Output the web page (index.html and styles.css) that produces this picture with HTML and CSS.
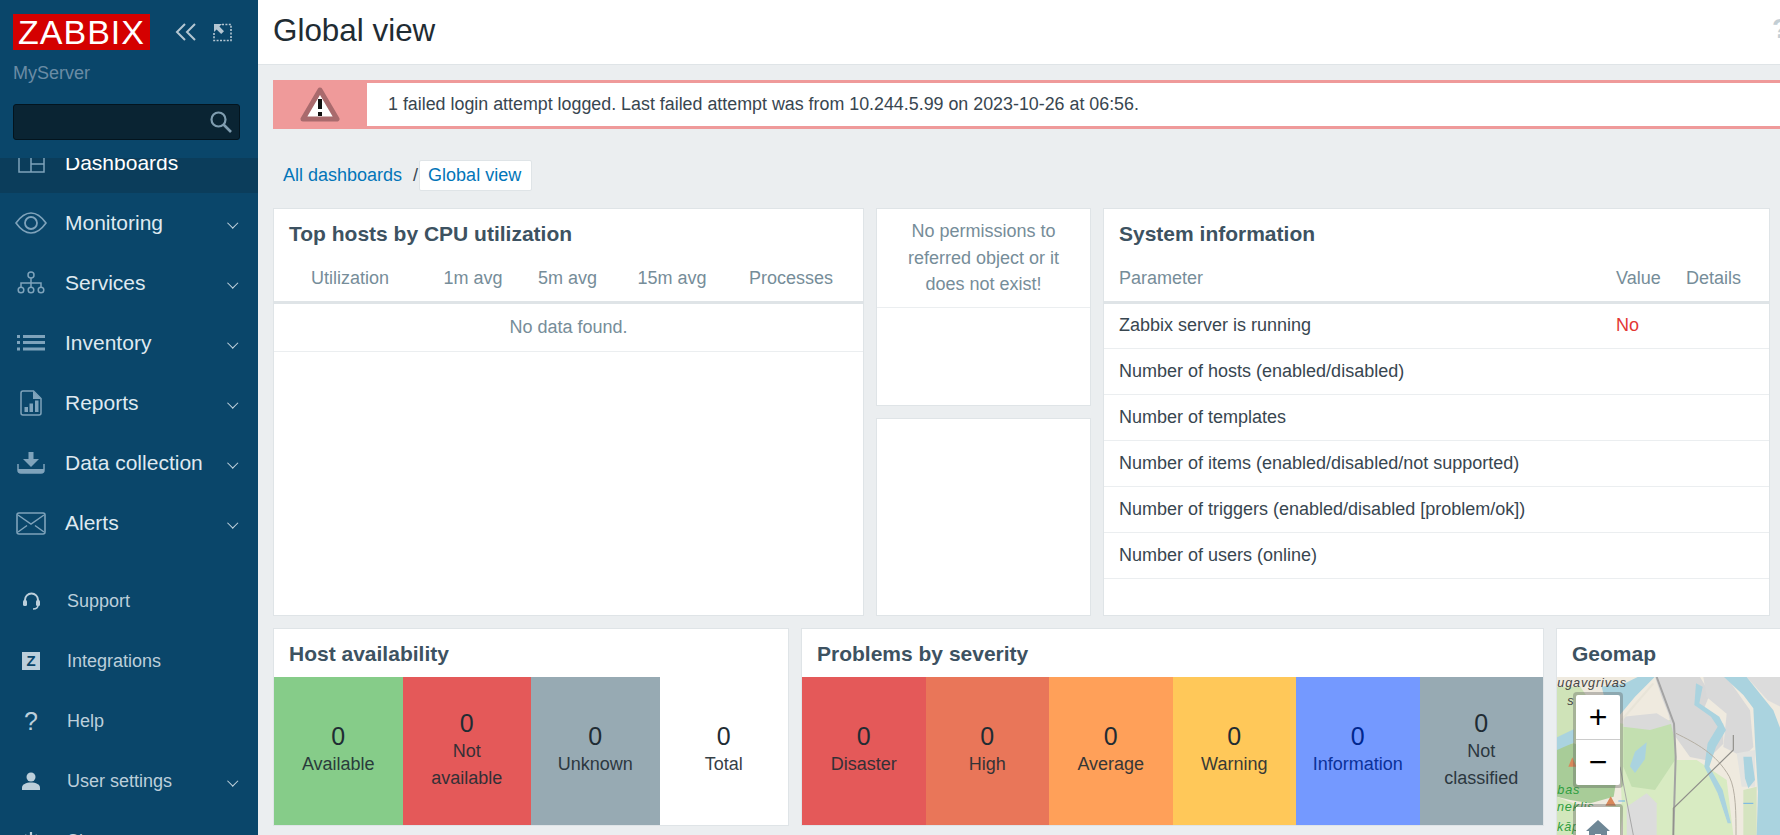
FILE: index.html
```html
<!DOCTYPE html>
<html lang="en">
<head>
    <meta charset="UTF-8">
    <title>Dashboard - Global view</title>
    <link rel="stylesheet" href="styles.css">
</head>
<body>

<aside class="sidebar">
    <div class="side-top">
        <div class="logo-row">
            <div class="logo">ZABBIX</div>
            <svg class="collapse-icon" width="22" height="18" viewBox="0 0 22 18"><path d="M10 1 2 9l8 8M20 1l-8 8 8 8" fill="none" stroke="#b4c6d2" stroke-width="2"/></svg>
            <svg class="kiosk-icon" width="19" height="19" viewBox="0 0 19 19"><path d="M9 1.500h9v16H1V10" fill="none" stroke="#b4c6d2" stroke-width="1.600" stroke-dasharray="2 1.400"/><path d="M1 1h8L6.400 3.600 11 8.200 8.200 11 3.600 6.400 1 9z" fill="#b4c6d2"/></svg>
        </div>
        <div class="server-name">MyServer</div>
        <div class="search-box">
            <svg width="24" height="24" viewBox="0 0 24 24"><circle cx="9.500" cy="9.500" r="7" fill="none" stroke="#7f9db0" stroke-width="2.200"/><path d="m14.500 14.500 7.500 7.500" stroke="#7f9db0" stroke-width="2.600"/></svg>
        </div>
    </div>

    <div class="menu-clip">
        <ul class="menu">
            <li class="menu-item current">
                <span class="menu-icon"><svg width="27" height="20" viewBox="0 0 27 20"><path d="M1 1h25v18H1zM13 1v18M13 11h13" fill="none" stroke="#7fa3bb" stroke-width="1.500"/></svg></span>
                Dashboards
            </li>
            <li class="menu-item has-sub">
                <span class="menu-icon"><svg width="32" height="24" viewBox="0 0 32 24"><path d="M1 12C6 5 11 2 16 2s10 3 15 10c-5 7-10 10-15 10S6 19 1 12z" fill="none" stroke="#7fa3bb" stroke-width="1.600"/><circle cx="16" cy="12" r="6" fill="none" stroke="#7fa3bb" stroke-width="1.800"/></svg></span>
                Monitoring
            </li>
            <li class="menu-item has-sub">
                <span class="menu-icon"><svg width="28" height="24" viewBox="0 0 28 24"><circle cx="14" cy="4" r="3" fill="none" stroke="#7fa3bb" stroke-width="1.500"/><path d="M14 7v5M4 16v-4h20v4M14 12v4" fill="none" stroke="#7fa3bb" stroke-width="1.500"/><circle cx="4" cy="19" r="2.800" fill="none" stroke="#7fa3bb" stroke-width="1.500"/><circle cx="14" cy="19" r="2.800" fill="none" stroke="#7fa3bb" stroke-width="1.500"/><circle cx="24" cy="19" r="2.800" fill="none" stroke="#7fa3bb" stroke-width="1.500"/></svg></span>
                Services
            </li>
            <li class="menu-item has-sub">
                <span class="menu-icon"><svg width="28" height="16" viewBox="0 0 28 16"><path d="M0 0h3v3H0zM0 6h3v3H0zM0 12.500h3v3H0zM6 0h22v3H6zM6 6h22v3H6zM6 12.500h22v3H6z" fill="#7fa3bb"/></svg></span>
                Inventory
            </li>
            <li class="menu-item has-sub">
                <span class="menu-icon"><svg width="22" height="26" viewBox="0 0 22 26"><path d="M3 1h10.500L21 8.500V23a2 2 0 0 1-2 2H3a2 2 0 0 1-2-2V3a2 2 0 0 1 2-2z" fill="none" stroke="#7fa3bb" stroke-width="1.500"/><path d="M13 1v8h8z" fill="#7fa3bb"/><path d="M4.500 17h3.500v5H4.500zM9.500 13.500H13V22H9.500zM15 10.500h3.500V22H15z" fill="#7fa3bb"/></svg></span>
                Reports
            </li>
            <li class="menu-item has-sub">
                <span class="menu-icon"><svg width="28" height="22" viewBox="0 0 28 22"><path d="M11.500 0h5v7H22l-8 8-8-8h5.500z" fill="#7fa3bb"/><path d="M1 12v6a3 3 0 0 0 3 3h20a3 3 0 0 0 3-3v-6" fill="none" stroke="#7fa3bb" stroke-width="1.500"/><path d="M1 17h26v1a3 3 0 0 1-3 3H4a3 3 0 0 1-3-3z" fill="#7fa3bb"/></svg></span>
                Data collection
            </li>
            <li class="menu-item has-sub">
                <span class="menu-icon"><svg width="30" height="23" viewBox="0 0 30 23"><rect x="1" y="1" width="28" height="21" rx="2" fill="none" stroke="#7fa3bb" stroke-width="1.600"/><path d="m2 3 13 9 13-9M2 20l9-6.500M28 20l-9-6.500" fill="none" stroke="#7fa3bb" stroke-width="1.500"/></svg></span>
                Alerts
            </li>
        </ul>
        <ul class="menu user-menu">
            <li class="menu-item">
                <span class="menu-icon"><svg width="17" height="19" viewBox="0 0 17 19"><path d="M2 10V8a6.500 6.500 0 0 1 13 0v2" fill="none" stroke="#bccfdb" stroke-width="2"/><rect x="0" y="8" width="4" height="6" rx="1.500" fill="#bccfdb"/><rect x="13" y="8" width="4" height="6" rx="1.500" fill="#bccfdb"/><path d="M15 13c0 3-2 4-5 4" fill="none" stroke="#bccfdb" stroke-width="1.600"/></svg></span>
                Support
            </li>
            <li class="menu-item">
                <span class="menu-icon"><span class="z-icon">Z</span></span>
                Integrations
            </li>
            <li class="menu-item">
                <span class="menu-icon help-icon">?</span>
                Help
            </li>
            <li class="menu-item has-sub">
                <span class="menu-icon"><svg width="18" height="18" viewBox="0 0 18 18"><circle cx="9" cy="5" r="4.500" fill="#bccfdb"/><path d="M0 18v-2.500C0 12.500 4 10.500 9 10.500s9 2 9 5V18z" fill="#bccfdb"/></svg></span>
                User settings
            </li>
            <li class="menu-item">
                <span class="menu-icon"><svg width="18" height="18" viewBox="0 0 18 18"><path d="M9 0v8" stroke="#bccfdb" stroke-width="2.200"/><path d="M4.500 3a8 8 0 1 0 9 0" fill="none" stroke="#bccfdb" stroke-width="2"/></svg></span>
                Sign out
            </li>
        </ul>
    </div>
</aside>

<main class="content">
    <header class="page-head">
        <h1>Global view</h1>
        <span class="head-help">?</span>
    </header>

    <div class="msg-bad">
        <div class="msg-icon">
            <svg width="40" height="36" viewBox="0 0 40 36"><path d="M20 3 37 32H3z" fill="#fff" stroke="#a96a6d" stroke-width="5" stroke-linejoin="round"/><path d="M18 12h4v10h-4zM18 25h4v4h-4z" fill="#111"/></svg>
        </div>
        <div class="msg-text">1 failed login attempt logged. Last failed attempt was from 10.244.5.99 on 2023-10-26 at 06:56.</div>
    </div>

    <nav class="crumbs">
        <a>All dashboards</a>
        <span class="crumb-sep">/</span>
        <a class="crumb-current">Global view</a>
    </nav>

    <section class="widget-row top-row">
        <div class="widget w-hosts">
            <h4>Top hosts by CPU utilization</h4>
            <table class="list hosts-table">
                <colgroup><col class="c1"><col class="c2"><col class="c3"><col class="c4"><col class="c5"><col></colgroup>
                <thead>
                    <tr><th>Utilization</th><th>1m avg</th><th>5m avg</th><th>15m avg</th><th>Processes</th><th></th></tr>
                </thead>
                <tbody>
                    <tr><td colspan="6" class="no-data">No data found.</td></tr>
                </tbody>
            </table>
        </div>

        <div class="middle-col">
            <div class="widget w-small">
                <div class="no-perm">No permissions to referred object or it does not exist!</div>
            </div>
            <div class="widget w-small"></div>
        </div>

        <div class="widget w-sysinfo">
            <h4>System information</h4>
            <table class="list sys-table">
                <colgroup><col class="s1"><col class="s2"><col class="s3"></colgroup>
                <thead>
                    <tr><th>Parameter</th><th>Value</th><th>Details</th></tr>
                </thead>
                <tbody>
                    <tr><td>Zabbix server is running</td><td class="red">No</td><td></td></tr>
                    <tr><td>Number of hosts (enabled/disabled)</td><td></td><td></td></tr>
                    <tr><td>Number of templates</td><td></td><td></td></tr>
                    <tr><td>Number of items (enabled/disabled/not supported)</td><td></td><td></td></tr>
                    <tr><td>Number of triggers (enabled/disabled [problem/ok])</td><td></td><td></td></tr>
                    <tr><td>Number of users (online)</td><td></td><td></td></tr>
                </tbody>
            </table>
        </div>
    </section>

    <section class="widget-row bottom-row">
        <div class="widget w-avail">
            <h4>Host availability</h4>
            <div class="tiles">
                <div class="tile t-available"><b>0</b><span>Available</span></div>
                <div class="tile t-disaster"><b>0</b><span>Not available</span></div>
                <div class="tile t-unknown"><b>0</b><span>Unknown</span></div>
                <div class="tile"><b>0</b><span>Total</span></div>
            </div>
        </div>

        <div class="widget w-severity">
            <h4>Problems by severity</h4>
            <div class="tiles">
                <div class="tile t-disaster"><b>0</b><span>Disaster</span></div>
                <div class="tile t-high"><b>0</b><span>High</span></div>
                <div class="tile t-average"><b>0</b><span>Average</span></div>
                <div class="tile t-warning"><b>0</b><span>Warning</span></div>
                <div class="tile t-info"><b>0</b><span>Information</span></div>
                <div class="tile t-unknown"><b>0</b><span>Not classified</span></div>
            </div>
        </div>

        <div class="widget w-geomap">
            <h4>Geomap</h4>
            <div class="map">
                <svg class="map-tiles" width="224" height="158" viewBox="51 171 672 474" preserveAspectRatio="none">
                    <rect x="51" y="171" width="672" height="474" fill="#efeadf"/>
                    <path d="M51 200h70l40 60-20 120-90 30z" fill="#cfe3b8"/>
                    <path d="M240 310l60 10 50-20 50 10 10 110 60 0 90 60 20 165H250l-10-210z" fill="#d8ebc2"/>
                    <path d="M250 320l150-20 5 120-60 90-70-10-25-60z" fill="#c3dfb0"/>
                    <path d="M51 380l50-10 70 30 60 70-10 60-70 20-60-10-40-10z" fill="#a8cc98"/>
                    <path d="M51 530l100 40 100-20-10 95H51z" fill="#d2e7bc"/>
                    <path d="M345 171h135l30 50-20 50 60 40 0 60-50 50-50-10-50-70-15-60-20-50z" fill="#d7d7d7"/>
                    <path d="M250 290l100-10 50 30-70 20-80-10z" fill="#dadada"/>
                    <path d="M490 171h70l70 100 10 110-30 30-60-30 10-100-60-50z" fill="#d9d9d9"/>
                    <path d="M620 171h103v90l-40-20z" fill="#dcdcdc"/>
                    <path d="M590 400l55-10v110l-40 0z" fill="#e3e3e0"/>
                    <path d="M610 510l40-10v145h-40z" fill="#d5e4c0"/>
                    <path d="M260 560l60-40 30 30 0 95h-90z" fill="#dcdcdc"/>
                    <path d="M552 171h68l40 50 40 50 23 60v314h-73l4-130-8-130-6-120-30-40z" fill="#aad3df"/>
                    <path d="M468 190l20 10-10 50 60 40 20 40-30 50-20 60 40 70 25 100-10 0-30-90-40-80 10-70 30-50-20-30-50-35z" fill="#aad3df"/>
                    <path d="M185 200l70-10 40-20 50 0-60 60-50 60-30-10z" fill="#aad3df"/>
                    <path d="M51 352l50-24 0 40-50 22z" fill="#aad3df"/>
                    <path d="M285 395l35-28-5 50-30 42-15-20z" fill="#aad3df"/>
                    <path d="M610 410h25l10 70-20 25-10-30z" fill="#aad3df"/>
                    <path d="M350 171l52 140 5 100-7 234" fill="none" stroke="#a3a3a3" stroke-width="6"/>
                    <path d="M408 340c60 30 120 60 160 130 20 40 20 110 20 175" fill="none" stroke="#b5afa3" stroke-width="3"/>
                    <path d="M580 345v45L400 565v80" fill="none" stroke="#908f8a" stroke-width="3.500"/>
                    <path d="M245 300 340 190" fill="none" stroke="#e8e4d8" stroke-width="6"/>
                    <path d="M240 440l40 205" fill="none" stroke="#a7a7a7" stroke-width="3"/>
                    <path d="M85 440l12-28 12 28zM196 557l16-28 16 28z" fill="#d9875a"/>
                    <path d="M610 550h30" stroke="#6fb3e8" stroke-width="3"/>
                    <path d="M235 543h20" stroke="#6fb3e8" stroke-width="3"/>
                    <text x="52" y="202" class="map-label">ugavgrivas</text>
                    <text x="82" y="256" class="map-label">s</text>
                    <text x="52" y="522" class="map-label green">bas</text>
                    <text x="51" y="572" class="map-label green">neklis</text>
                    <text x="51" y="632" class="map-label green">kāp</text>
                </svg>
                <div class="map-ctrl zoom-ctrl">
                    <a class="plus">+</a>
                    <a class="minus">&minus;</a>
                </div>
                <div class="map-ctrl home-ctrl">
                    <a><svg width="24" height="20" viewBox="0 0 24 20"><path d="M12 0 24 11h-3v9h-6v-6H9v6H3v-9H0z" fill="#6e8796"/></svg></a>
                </div>
            </div>
        </div>
    </section>
</main>

</body>
</html>
```

FILE: styles.css
```css
* {
    box-sizing: border-box;
}

html, body {
    height: 100%;
}

body {
    margin: 0;
    display: flex;
    overflow: hidden;
    background-color: #ebeef0;
    color: #1f2c33;
    font-family: "Liberation Sans", Arial, sans-serif;
    font-size: 18px;
}

/* sidebar */
.sidebar {
    width: 258px;
    height: 835px;
    flex-shrink: 0;
    overflow: hidden;
    background-color: #0a466a;
}

.side-top {
    height: 158px;
    padding: 14px 18px 0 13px;
}

.logo-row {
    display: flex;
    align-items: center;
}

.logo {
    width: 137px;
    height: 36px;
    background-color: #d40000;
    color: #fff;
    font-size: 34px;
    line-height: 37px;
    letter-spacing: 1px;
    text-align: center;
}

.collapse-icon {
    margin-left: 25px;
}

.kiosk-icon {
    margin-left: 16px;
}

.server-name {
    margin-top: 13px;
    color: #6a8ca5;
    font-size: 18px;
    line-height: 20px;
}

.search-box {
    display: flex;
    align-items: center;
    justify-content: flex-end;
    height: 36px;
    margin-top: 21px;
    padding-right: 6px;
    background-color: #0a2433;
    border: 1px solid #03141e;
    border-radius: 3px;
}

.menu-clip {
    height: 677px;
    overflow: hidden;
}

.menu {
    list-style: none;
    margin: -25px 0 0;
    padding: 0;
}

.user-menu {
    margin-top: 18px;
}

.menu-item {
    display: flex;
    align-items: center;
    height: 60px;
    position: relative;
    color: #dfe9f0;
    font-size: 21px;
}

.menu-item.current {
    background-color: #0b3d5b;
    color: #fff;
}

.menu-icon {
    display: flex;
    align-items: center;
    justify-content: center;
    width: 38px;
    margin: 0 15px 0 12px;
}

.has-sub::after {
    content: "";
    position: absolute;
    left: 229px;
    top: 26px;
    width: 6.500px;
    height: 6.500px;
    border-right: 1.500px solid #c5d5df;
    border-bottom: 1.500px solid #c5d5df;
    transform: rotate(45deg);
}

.user-menu .menu-item {
    color: #bccfdb;
    font-size: 18px;
}

.user-menu .menu-icon {
    margin-right: 17px;
}

.z-icon {
    display: block;
    width: 18px;
    height: 18px;
    background-color: #bccfdb;
    color: #0a466a;
    font-size: 15px;
    font-weight: bold;
    line-height: 18px;
    text-align: center;
}

.help-icon {
    font-size: 25px;
    color: #bccfdb;
}

/* main part */
.content {
    flex: 1;
    min-width: 0;
    height: 835px;
    overflow: hidden;
}

.page-head {
    display: flex;
    align-items: center;
    justify-content: space-between;
    height: 65px;
    padding-left: 15px;
    background-color: #fff;
    border-bottom: 1px solid #dfe4e7;
}

.page-head h1 {
    margin: 0 0 2px;
    font-size: 31.400px;
    font-weight: normal;
}

.head-help {
    margin: 0 -9px 6px 0;
    color: #c3ced4;
    font-size: 28px;
    font-weight: bold;
}

.msg-bad {
    display: flex;
    height: 49px;
    margin: 15px -20px 0 15px;
    border: 3px solid #ef9a9a;
    border-radius: 3px;
    background-color: #fff;
}

.msg-icon {
    display: flex;
    align-items: center;
    justify-content: center;
    flex-shrink: 0;
    width: 94px;
    margin: -3px 0 -3px -3px;
    background-color: #ef9a9a;
}

.msg-text {
    padding-left: 21px;
    color: #384650;
    font-size: 17.850px;
    line-height: 43px;
}

.crumbs {
    display: flex;
    align-items: center;
    height: 34px;
    margin: 29px 0 0 15px;
}

.crumbs a {
    padding: 0 9px 0 10px;
    color: #0275b8;
    line-height: 29px;
}

.crumb-sep {
    margin-left: 2px;
    color: #384650;
}

.crumbs .crumb-current {
    margin-left: 1px;
    padding: 0 10px 0 8px;
    background-color: #fff;
    border: 1px solid #dfe4e7;
    border-radius: 2px;
}

.widget-row {
    display: flex;
    gap: 12px;
    margin-left: 15px;
}

.top-row {
    height: 408px;
    margin-top: 16px;
}

.bottom-row {
    align-items: flex-start;
    margin-top: 12px;
    width: 1560px;
}

.widget {
    background-color: #fff;
    border: 1px solid #dfe4e7;
    color: #1f2c33;
}

.widget h4 {
    margin: 0;
    height: 48px;
    padding-left: 15px;
    color: #3d5261;
    font-size: 21px;
    font-weight: bold;
    line-height: 50px;
}

.w-hosts {
    width: 591px;
}

.middle-col {
    display: flex;
    flex-direction: column;
    gap: 12px;
    width: 215px;
}

.w-small {
    flex: 1;
}

.no-perm {
    padding: 9px 15px;
    height: 99px;
    border-bottom: 1px solid #ebeef0;
    color: #768d99;
    line-height: 26.500px;
    text-align: center;
}

.w-sysinfo {
    width: 667px;
}

/* tables */
.list {
    width: 100%;
    table-layout: fixed;
    border-collapse: collapse;
}

.list th {
    height: 45px;
    padding: 0 0 0 15px;
    border-bottom: 3px solid #dfe4e7;
    color: #768d99;
    font-weight: normal;
    text-align: left;
}

.list td {
    height: 46px;
    padding: 0 0 0 15px;
    border-bottom: 1px solid #ebeef0;
    color: #384650;
}

.hosts-table th {
    padding: 0;
    text-align: center;
}

.c1 { width: 152px; }
.c2 { width: 94px; }
.c3 { width: 95px; }
.c4 { width: 114px; }
.c5 { width: 124px; }

.hosts-table td.no-data {
    height: 49px;
    padding: 0;
    color: #768d99;
    text-align: center;
}

.s1 { width: 497px; }
.s2 { width: 70px; }

.red {
    color: #e33734 !important;
}

/* status tiles */
.w-avail {
    width: 516px;
}

.w-severity {
    width: 743px;
}

.w-geomap {
    flex: 1;
}

.tiles {
    display: flex;
    height: 148px;
}

.tile {
    flex: 1;
    display: flex;
    flex-direction: column;
    align-items: center;
    justify-content: center;
    padding: 0 15px 2px;
    text-align: center;
}

.tile b {
    font-size: 25px;
    font-weight: normal;
    line-height: 29px;
}

.tile span {
    line-height: 27px;
    opacity: 0.9;
}

.t-available { background-color: #86cc89; }
.t-disaster { background-color: #e45959; }
.t-high { background-color: #e97659; }
.t-average { background-color: #ffa059; }
.t-warning { background-color: #ffc859; }
.t-info { background-color: #7499ff; color: #00268e; }
.t-unknown { background-color: #97aab3; }

/* geomap */
.map {
    position: relative;
    height: 158px;
    overflow: hidden;
}

.map-tiles {
    display: block;
}

.map-label {
    fill: #444;
    font-family: "Liberation Sans", Arial, sans-serif;
    font-size: 38px;
    font-style: italic;
    letter-spacing: 2.500px;
}

.map-label.green {
    fill: #2f9e3f;
}

.map-ctrl {
    position: absolute;
    left: 16px;
    width: 50px;
    padding: 3px;
    border-radius: 4px;
    background-color: rgba(90, 90, 90, 0.35);
}

.map-ctrl a {
    display: flex;
    align-items: center;
    justify-content: center;
    height: 45px;
    background-color: #fff;
    color: #000;
    font-size: 32px;
}

.zoom-ctrl {
    top: 15px;
}

.plus {
    border-radius: 2px 2px 0 0;
    border-bottom: 1px solid #ccc;
}

.minus {
    border-radius: 0 0 2px 2px;
}

.home-ctrl {
    top: 127px;
}
```
